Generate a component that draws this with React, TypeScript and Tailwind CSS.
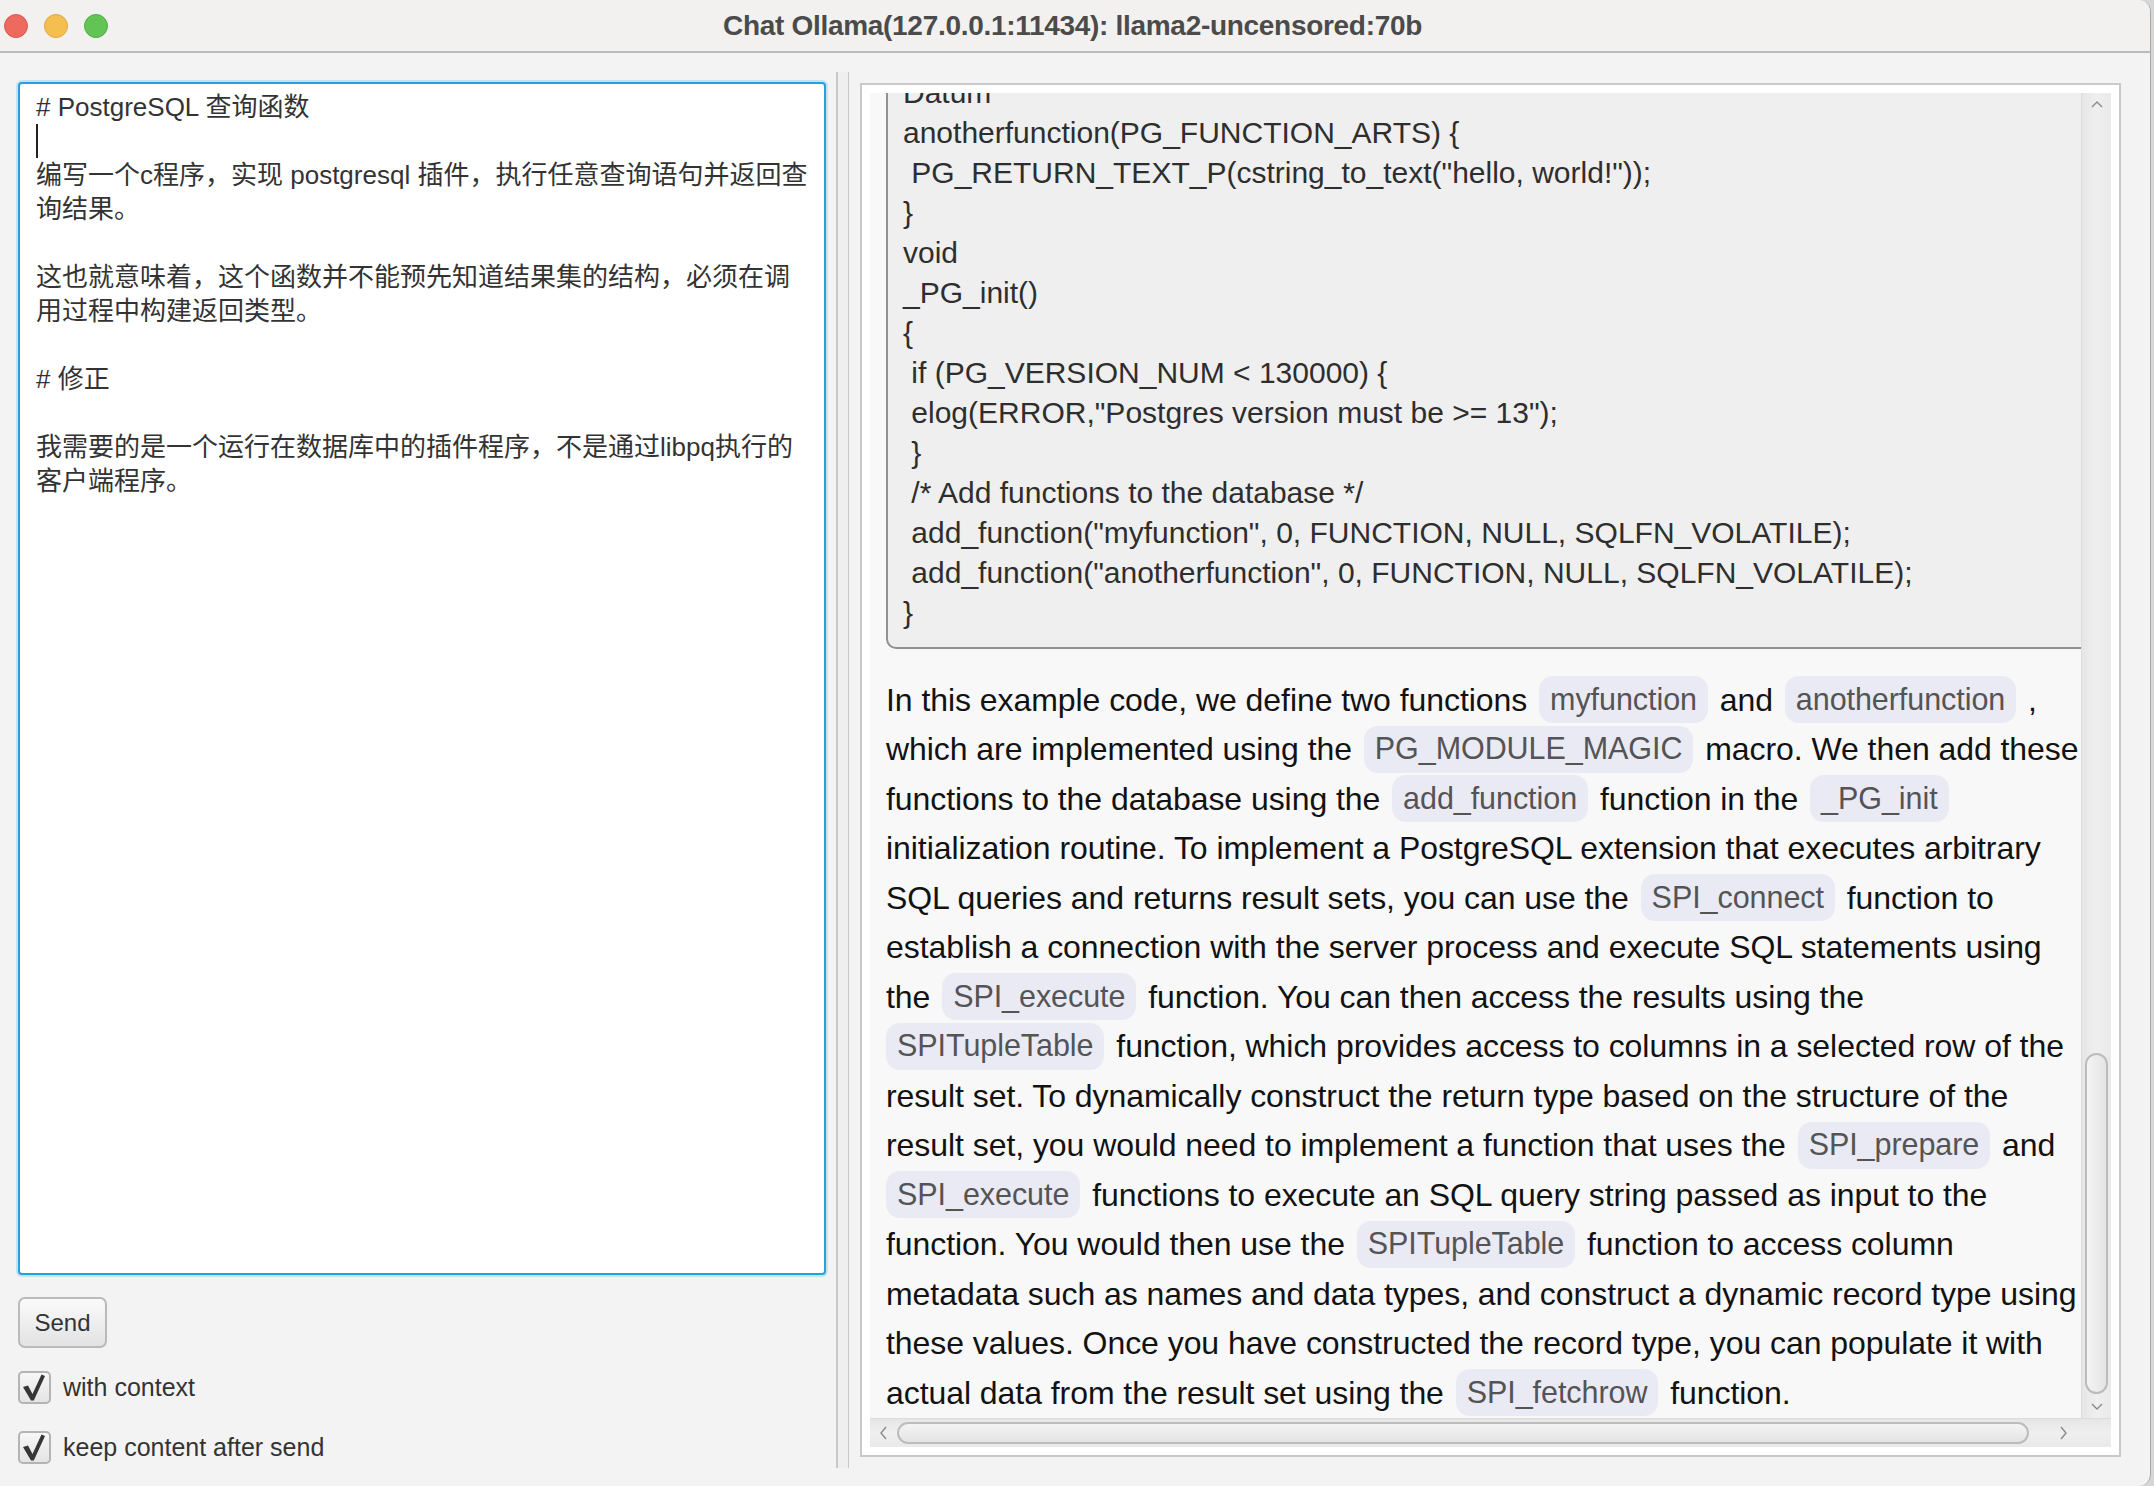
import { Fragment } from 'react'

const sans = { fontFamily: '"Liberation Sans", "Noto Sans CJK SC", sans-serif' }

const promptLines = [
  '# PostgreSQL 查询函数',
  '|caret',
  '编写一个c程序，实现 postgresql 插件，执行任意查询语句并返回查',
  '询结果。',
  '',
  '这也就意味着，这个函数并不能预先知道结果集的结构，必须在调',
  '用过程中构建返回类型。',
  '',
  '# 修正',
  '',
  '我需要的是一个运行在数据库中的插件程序，不是通过libpq执行的',
  '客户端程序。',
]

const codeLines = [
  'Datum',
  'anotherfunction(PG_FUNCTION_ARTS) {',
  ' PG_RETURN_TEXT_P(cstring_to_text("hello, world!"));',
  '}',
  'void',
  '_PG_init()',
  '{',
  ' if (PG_VERSION_NUM < 130000) {',
  ' elog(ERROR,"Postgres version must be >= 13");',
  ' }',
  ' /* Add functions to the database */',
  ' add_function("myfunction", 0, FUNCTION, NULL, SQLFN_VOLATILE);',
  ' add_function("anotherfunction", 0, FUNCTION, NULL, SQLFN_VOLATILE);',
  '}',
]

// `name` marks an inline code chip
const answerLines: string[][] = [
  ['In this example code, we define two functions ', '`myfunction', ' and ', '`anotherfunction', ' ,'],
  ['which are implemented using the ', '`PG_MODULE_MAGIC', ' macro. We then add these'],
  ['functions to the database using the ', '`add_function', ' function in the ', '`_PG_init'],
  ['initialization routine. To implement a PostgreSQL extension that executes arbitrary'],
  ['SQL queries and returns result sets, you can use the ', '`SPI_connect', ' function to'],
  ['establish a connection with the server process and execute SQL statements using'],
  ['the ', '`SPI_execute', ' function. You can then access the results using the'],
  ['`SPITupleTable', ' function, which provides access to columns in a selected row of the'],
  ['result set. To dynamically construct the return type based on the structure of the'],
  ['result set, you would need to implement a function that uses the ', '`SPI_prepare', ' and'],
  ['`SPI_execute', ' functions to execute an SQL query string passed as input to the'],
  ['function. You would then use the ', '`SPITupleTable', ' function to access column'],
  ['metadata such as names and data types, and construct a dynamic record type using'],
  ['these values. Once you have constructed the record type, you can populate it with'],
  ['actual data from the result set using the ', '`SPI_fetchrow', ' function.'],
]

function Chevron({ dir }: { dir: 'up' | 'down' | 'left' | 'right' }) {
  const d = {
    up: 'M2 8 L7 3 L12 8',
    down: 'M2 3 L7 8 L12 3',
    left: 'M8 1 L3 7 L8 13',
    right: 'M3 1 L8 7 L3 13',
  }[dir]
  const vertical = dir === 'up' || dir === 'down'
  return (
    <svg width={vertical ? 16 : 11} height={vertical ? 11 : 16} viewBox={vertical ? '0 0 14 11' : '0 0 11 14'}>
      <path d={d} fill="none" stroke="#8a8a8a" strokeWidth="1.4" />
    </svg>
  )
}

function CheckBox({ label }: { label: string }) {
  return (
    <div className="flex items-center gap-[12px]">
      <div className="w-[33px] h-[33px] rounded-[5px] border-2 border-[#b4b4b4] bg-gradient-to-b from-[#f7f7f7] to-[#e4e4e4] flex items-center justify-center">
        <svg width="29" height="29" viewBox="0 0 29 29">
          <path d="M3 14 L8 12.5 L12.5 21 L21.5 1.5 L25 3 L13.8 27.5 L11 27.5 Z" fill="#363636" />
        </svg>
      </div>
      <span className="text-[25px] text-[#333]">{label}</span>
    </div>
  )
}

export default function App() {
  return (
    <div className="w-[2154px] h-[1486px] flex bg-[#d6d6d6]" style={sans}>
      <div className="w-[2151px] h-full flex flex-col bg-[#f3f3f3] rounded-tr-[12px] rounded-br-[12px] border-r border-[#a8a8a8] overflow-hidden">
        {/* title bar */}
        <div className="h-[53px] shrink-0 flex items-center bg-[#f2f1f0] border-b-2 border-[#bcbcbc]">
          <div className="flex items-center gap-[16px] pl-[4px]">
            <div className="w-[24px] h-[24px] rounded-full bg-[#ee6a5f] border border-[#d85a50]" />
            <div className="w-[24px] h-[24px] rounded-full bg-[#f5bf4f] border border-[#dea73f]" />
            <div className="w-[24px] h-[24px] rounded-full bg-[#61c454] border border-[#52ad46]" />
          </div>
          <div className="flex-1 text-center text-[28px] font-bold text-[#4b4b4b] pr-[113px] tracking-[-0.3px]">
            Chat Ollama(127.0.0.1:11434): llama2-uncensored:70b
          </div>
        </div>

        <div className="flex-1 flex">
          {/* left column */}
          <div className="pl-[18px] pt-[29px] flex flex-col">
            <div className="w-[808px] h-[1193px] bg-white rounded-[4px] border-2 border-[#2a9fd8] ring-2 ring-[#c3e2f2] pt-[6px] pl-[16px] text-[26px] text-[#333]">
              {promptLines.map((line, i) =>
                line === '|caret' ? (
                  <div key={i} className="h-[34px] flex items-center">
                    <div className="w-[2px] h-[34px] bg-[#222]" />
                  </div>
                ) : (
                  <div key={i} className="h-[34px] leading-[34px] whitespace-pre">
                    {line}
                  </div>
                )
              )}
            </div>
            <button className="mt-[22px] w-[89px] h-[51px] rounded-[7px] border-2 border-[#bababa] bg-gradient-to-b from-[#fafafa] to-[#e3e3e3] text-[24px] text-[#333]">
              Send
            </button>
            <div className="mt-[21px]">
              <CheckBox label="with context" />
            </div>
            <div className="mt-[22px]">
              <CheckBox label="keep content after send" />
            </div>
          </div>

          {/* split divider */}
          <div className="ml-[10px] mt-[19px] w-[13px] h-[1396px] border-l-2 border-r border-[#c8c8c8] bg-[#efefef]" />

          {/* right panel */}
          <div className="ml-[11px] mt-[30px] w-[1261px] h-[1374px] border-2 border-[#c9c9c9] bg-white p-[8px] flex flex-col">
            <div className="flex h-[1326px]">
              <div className="w-[1212px] h-full bg-[#f8f8f8] overflow-hidden pl-[16px]">
                <div className="-mt-[20px]">
                  <div className="bg-[#efefef] border-l-2 border-b-2 border-[#919191] rounded-bl-[10px] pl-[15px] pb-[14px] text-[30px] text-[#2e2e2e]">
                    {codeLines.map((line, i) => (
                      <div key={i} className="h-[40px] leading-[40px] whitespace-pre">
                        {line}
                      </div>
                    ))}
                  </div>
                  <div className="mt-[26px] text-[32px] text-[#121212] tracking-[-0.06px]">
                    {answerLines.map((parts, i) => (
                      <div key={i} className="h-[49.5px] flex items-center whitespace-pre">
                        {parts.map((p, j) =>
                          p.startsWith('`') ? (
                            <span
                              key={j}
                              className={`inline-flex items-center h-[47px] px-[11px] rounded-[14px] bg-[#eaeaf4] text-[30.5px] text-[#545454] ${j === 0 ? 'mr-[3px]' : 'mx-[3px]'}`}
                            >
                              {p.slice(1)}
                            </span>
                          ) : (
                            <Fragment key={j}>{p}</Fragment>
                          )
                        )}
                      </div>
                    ))}
                  </div>
                </div>
              </div>
              {/* vertical scrollbar */}
              <div className="w-[30px] h-full bg-gradient-to-r from-[#e6e6e6] via-[#efefef] to-[#e9e9e9] border-l border-[#dcdcdc] flex flex-col items-center">
                <div className="h-[22px] flex items-center">
                  <Chevron dir="up" />
                </div>
                <div className="flex-1 pt-[938px]">
                  <div className="w-[23px] h-[341px] rounded-full border-2 border-[#bcbcbc] bg-gradient-to-r from-[#f4f4f4] to-[#e4e4e4]" />
                </div>
                <div className="h-[22px] flex items-center">
                  <Chevron dir="down" />
                </div>
              </div>
            </div>
            {/* horizontal scrollbar */}
            <div className="h-[30px] bg-gradient-to-b from-[#e6e6e6] via-[#efefef] to-[#e9e9e9] border-t border-[#dcdcdc] flex items-center">
              <div className="w-[27px] flex justify-center">
                <Chevron dir="left" />
              </div>
              <div className="w-[1132px] h-[22px] rounded-full border-2 border-[#bcbcbc] bg-gradient-to-b from-[#f4f4f4] to-[#e4e4e4]" />
              <div className="flex-1 flex justify-center pr-[14px]">
                <Chevron dir="right" />
              </div>
            </div>
          </div>
        </div>
      </div>
    </div>
  )
}
